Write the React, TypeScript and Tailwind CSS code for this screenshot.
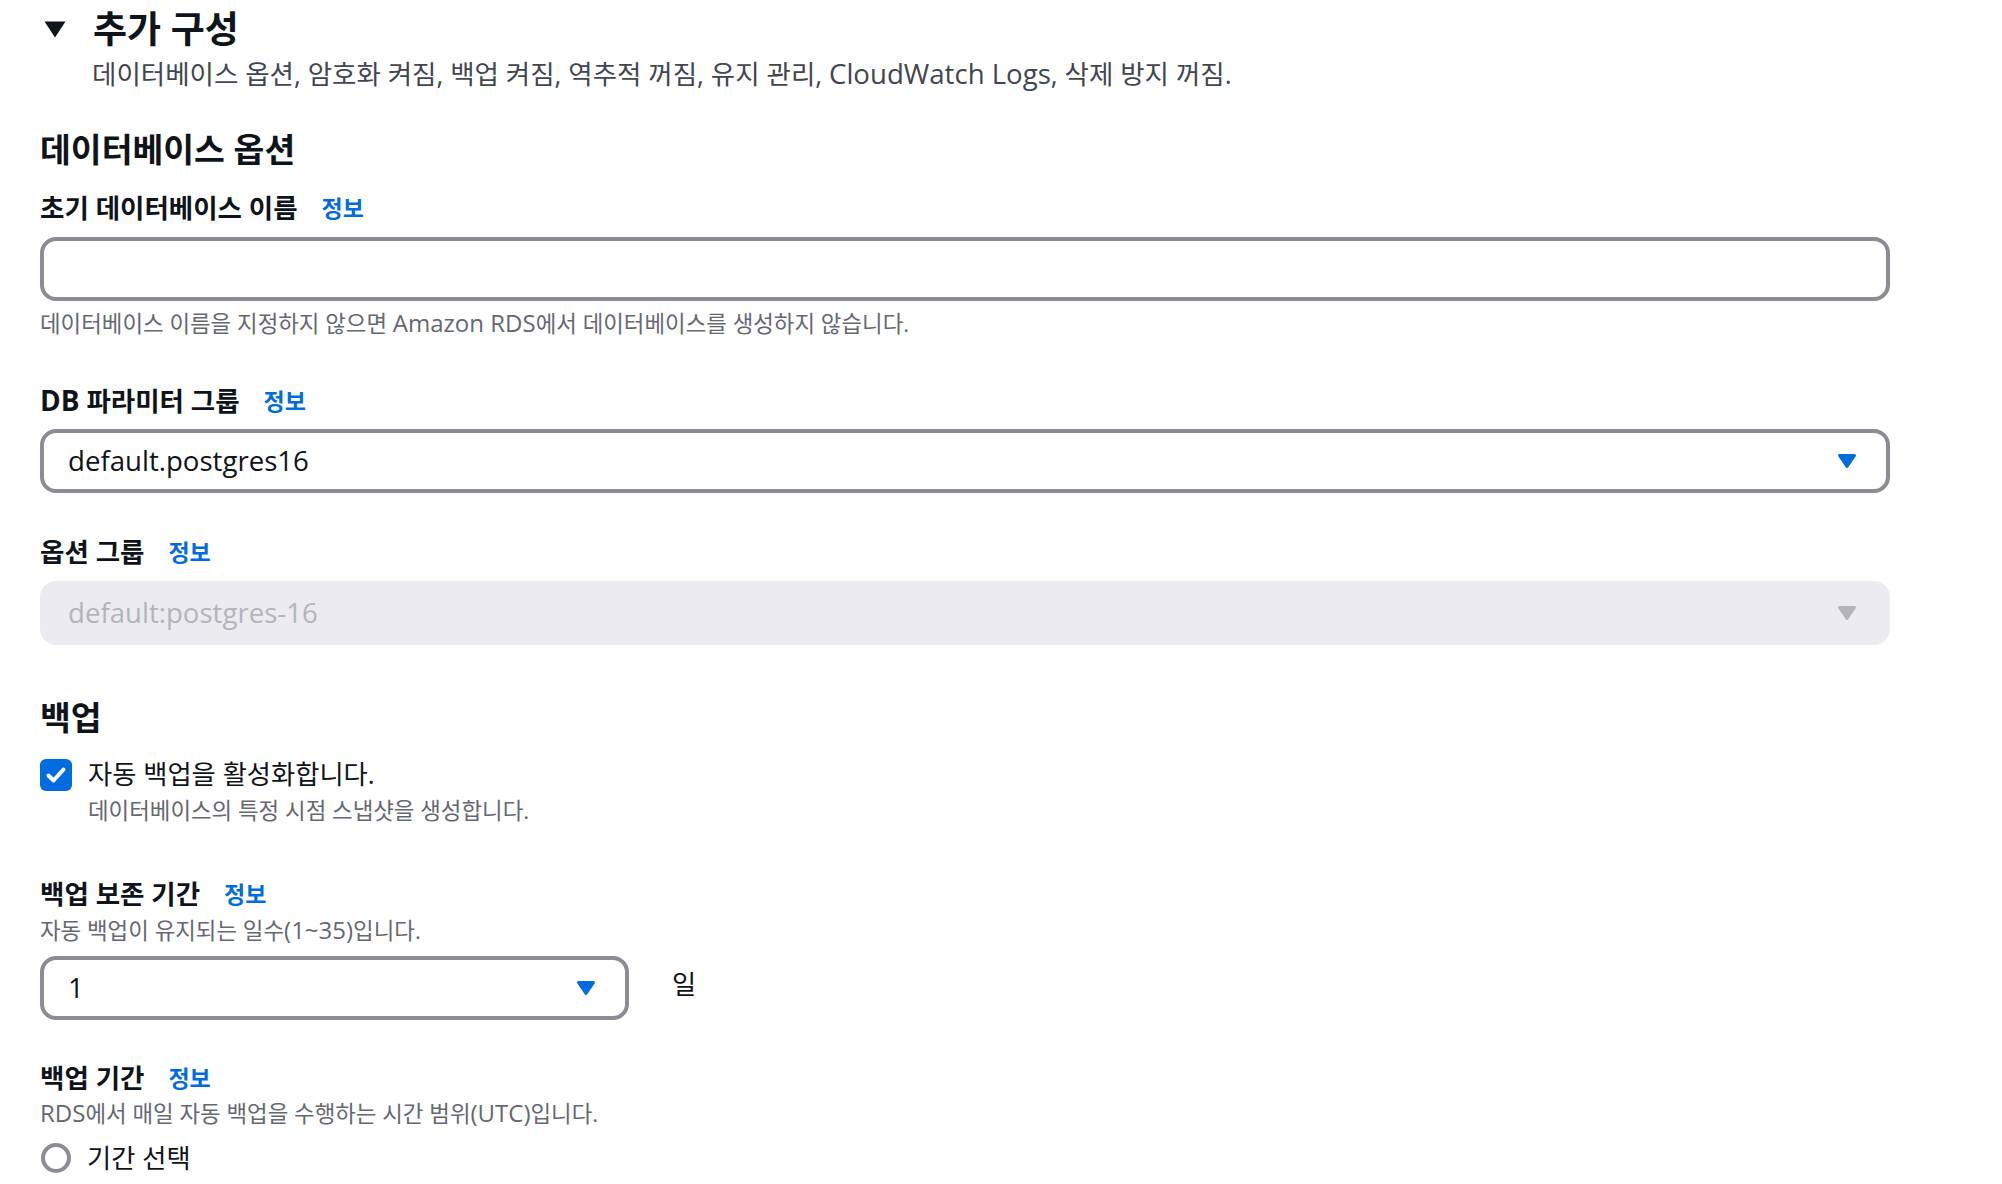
import React from "react";

const Info = () => (
  <span className="ml-6 text-[23px] font-bold text-[#006ce0]">정보</span>
);

const Caret = ({ color }: { color: string }) => (
  <svg width="20" height="16" viewBox="0 0 20 16" className="shrink-0">
    <path
      d="M2.5 2.5 H17.5 L10 13.5 Z"
      fill={color}
      stroke={color}
      strokeWidth="3"
      strokeLinejoin="round"
    />
  </svg>
);

const Label = ({ children, className = "" }: { children: React.ReactNode; className?: string }) => (
  <div className={`flex h-[34px] items-center text-[26.5px] font-bold leading-[34px] text-[#0f141a] ${className}`}>
    <span>{children}</span>
    <Info />
  </div>
);

const Help = ({ children, className = "" }: { children: React.ReactNode; className?: string }) => (
  <div className={`h-[30px] text-[22.4px] leading-[30px] text-[#656871] ${className}`}>{children}</div>
);

const Select = ({
  value,
  disabled = false,
  className = "",
}: {
  value: string;
  disabled?: boolean;
  className?: string;
}) =>
  disabled ? (
    <div className={`flex h-16 items-center justify-between rounded-2xl bg-[#ebebf0] pl-[28px] pr-[33px] ${className}`}>
      <span className="text-[27.6px] text-[#b4b4bb]">{value}</span>
      <Caret color="#b4b4bb" />
    </div>
  ) : (
    <div className={`flex h-16 items-center justify-between rounded-2xl border-4 border-[#8c8c94] bg-white pl-[24px] pr-[29px] ${className}`}>
      <span className="text-[27.6px] text-[#0f141a]">{value}</span>
      <Caret color="#006ce0" />
    </div>
  );

export default function App() {
  return (
    <div className="min-h-[1184px] w-[2002px] bg-white font-['Open_Sans','Noto_Sans_CJK_KR',sans-serif] text-[#0f141a]">
      <div className="flex w-[1890px] flex-col pl-10 pt-[7px]">
        {/* Header */}
        <div className="flex h-[44px] items-center">
          <svg width="22" height="17" viewBox="0 0 22 17" className="ml-[4px] shrink-0">
            <path d="M0.5 0.5 H21.5 L11 16.5 Z" fill="#0f141a" />
          </svg>
          <h2 className="ml-[27px] text-[37px] font-bold leading-[44px] text-[#0f141a]">추가 구성</h2>
        </div>
        <div className="mt-[7px] h-[32px] pl-[52px] text-[26.5px] leading-[32px] text-[#424650]">
          데이터베이스 옵션, 암호화 켜짐, 백업 켜짐, 역추적 꺼짐, 유지 관리,{" "}
          <span className="text-[27.6px] leading-none">CloudWatch Logs</span>, 삭제 방지 꺼짐.
        </div>

        {/* Database options */}
        <h3 className="mt-[39px] h-[40px] text-[33.5px] font-bold leading-[40px]">데이터베이스 옵션</h3>

        <Label className="mt-[22px]">초기 데이터베이스 이름</Label>
        <div className="mt-3 h-16 rounded-2xl border-4 border-[#8c8c94] bg-white" />
        <Help className="mt-2">
          데이터베이스 이름을 지정하지 않으면 <span className="text-[24px] leading-none">Amazon RDS</span>에서
          데이터베이스를 생성하지 않습니다.
        </Help>

        <Label className="mt-[45px]">
          <span className="text-[28px] leading-none">DB</span> 파라미터 그룹
        </Label>
        <Select className="mt-[11px]" value="default.postgres16" />

        <Label className="mt-[42px]">옵션 그룹</Label>
        <Select className="mt-3" value="default:postgres-16" disabled />

        {/* Backup */}
        <h3 className="mt-[52px] h-[40px] text-[33.5px] font-bold leading-[40px]">백업</h3>
        <div className="mt-5 flex h-[34px] items-start">
          <div className="mt-[2px] flex h-8 w-8 shrink-0 items-center justify-center rounded-[6px] bg-[#006ce0]">
            <svg width="32" height="32" viewBox="0 0 32 32">
              <path
                d="M8.5 16.5 L13.5 21.5 L23.5 10.5"
                fill="none"
                stroke="#ffffff"
                strokeWidth="4"
                strokeLinecap="round"
                strokeLinejoin="round"
              />
            </svg>
          </div>
          <span className="ml-4 text-[26.3px] leading-[34px] text-[#0f141a]">자동 백업을 활성화합니다.</span>
        </div>
        <Help className="mt-[5px] pl-12">데이터베이스의 특정 시점 스냅샷을 생성합니다.</Help>

        <Label className="mt-[51px]">백업 보존 기간</Label>
        <Help className="mt-[5px]">
          자동 백업이 유지되는 일수<span className="text-[24px] leading-none">(1~35)</span>입니다.
        </Help>
        <div className="mt-[10px] flex items-center">
          <Select className="w-[589px]" value="1" />
          <span className="mb-[8px] ml-[43px] text-[26.3px] leading-[34px] text-[#0f141a]">일</span>
        </div>

        <Label className="mt-[41px]">백업 기간</Label>
        <Help className="mt-[4px]">
          <span className="text-[24px] leading-none">RDS</span>에서 매일 자동 백업을 수행하는 시간 범위
          <span className="text-[24px] leading-none">(UTC)</span>입니다.
        </Help>
        <div className="mt-[12px] flex h-[34px] items-center">
          <div className="ml-[1px] h-[30px] w-[30px] shrink-0 rounded-full border-4 border-[#8c8c94] bg-white" />
          <span className="ml-4 text-[26.3px] leading-[34px] text-[#0f141a]">기간 선택</span>
        </div>
      </div>
    </div>
  );
}
